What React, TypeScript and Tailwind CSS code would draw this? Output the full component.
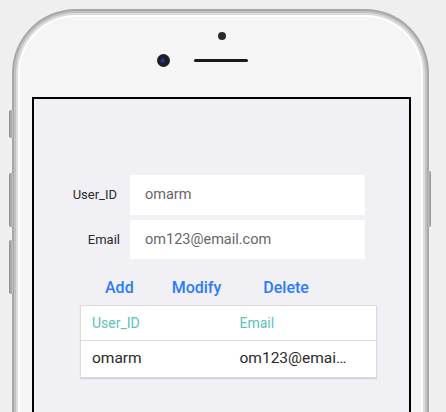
import React from "react";

const users = [{ id: "omarm", email: "om123@email.com", shown: "om123@emai…" }];

const App: React.FC = () => {
  return (
    <div className="relative w-[446px] h-[412px] overflow-hidden bg-[#efefef] font-['Roboto',sans-serif]">
      {/* side buttons */}
      <div className="absolute left-[9px] top-[110px] w-[4px] h-[28px] rounded-l-[2px] bg-gradient-to-r from-[#8f8f8f] to-[#c4c4c4]" />
      <div className="absolute left-[9px] top-[173px] w-[4px] h-[54px] rounded-l-[2px] bg-gradient-to-r from-[#8f8f8f] to-[#c4c4c4]" />
      <div className="absolute left-[9px] top-[240px] w-[4px] h-[54px] rounded-l-[2px] bg-gradient-to-r from-[#8f8f8f] to-[#c4c4c4]" />
      <div className="absolute left-[428px] top-[171px] w-[3px] h-[56px] rounded-r-[2px] bg-gradient-to-r from-[#c4c4c4] to-[#8f8f8f]" />

      <div className="pt-[9px] pl-[12px]">
        {/* phone frame */}
        <div className="w-[417px] h-[520px] rounded-[64px] bg-[#a8a8a8] p-[2px]">
          <div className="h-full rounded-[62px] bg-[#c2c2c2] p-[2px]">
            <div className="h-full rounded-[60px] bg-[#dcdcdc] p-[2px]">
              <div className="h-full rounded-[58px] bg-white p-[2px]">
                <div className="h-full rounded-[56px] bg-[#f5f5f5] flex flex-col">
                  {/* front sensor dot */}
                  <div className="mt-[15px] self-center w-[8px] h-[8px] rounded-full bg-[#2b2b2b] ml-[2px]" />
                  {/* camera + speaker */}
                  <div className="mt-[14px] grid grid-cols-[1fr_auto_1fr] items-center h-[13px]">
                    <div className="flex justify-end pr-[24px]">
                      <div className="w-[13px] h-[13px] rounded-full bg-[radial-gradient(circle_at_45%_50%,#2d4f96_0%,#142040_30%,#1c1c1c_55%,#3a3a3a_100%)]" />
                    </div>
                    <div className="w-[54px] h-[3px] rounded-full bg-[#1a1a1a]" />
                    <div />
                  </div>

                  {/* screen */}
                  <div className="mt-[30px] ml-[12px] w-[379px] h-[400px] border-2 border-black bg-[#f0f0f5]">
                    <div className="pt-[76px] flex flex-col gap-[5px]">
                      <div className="flex items-center">
                        <div className="w-[96px] pr-[13px] flex justify-end text-[13px] text-[#2a2a2a]">User_ID</div>
                        <div className="w-[235px] h-[40px] bg-white flex items-center pl-[15px] text-[14.5px] text-[#666]">
                          omarm
                        </div>
                      </div>
                      <div className="flex items-center">
                        <div className="w-[96px] pr-[10px] flex justify-end text-[13px] text-[#2a2a2a]">Email</div>
                        <div className="w-[235px] h-[39px] bg-white flex items-center pl-[15px] text-[14.5px] text-[#666]">
                          om123@email.com
                        </div>
                      </div>
                    </div>

                    {/* actions */}
                    <div className="mt-[17px] ml-[71px] flex items-center h-[24px] text-[16px] font-medium text-[#2b7bff]">
                      <button className="leading-none">Add</button>
                      <button className="leading-none ml-[38px]">Modify</button>
                      <button className="leading-none ml-[42px]">Delete</button>
                    </div>

                    {/* table */}
                    <div className="mt-[5px] ml-[46px] w-[297px] border border-[#dcdcdc] bg-white shadow-[0_1px_1px_rgba(0,0,0,0.12)]">
                      <div className="grid grid-cols-2 h-[35px] items-center border-b border-[#dcdcdc] text-[14px] text-[#5cc2ba]">
                        <div className="pl-[11px]">User_ID</div>
                        <div className="pl-[11px]">Email</div>
                      </div>
                      {users.map((u) => (
                        <div key={u.id} className="grid grid-cols-2 h-[36px] items-center text-[15.5px] text-[#2a2a2a]">
                          <div className="pl-[11px]">{u.id}</div>
                          <div className="pl-[11px] whitespace-nowrap" title={u.email}>
                            {u.shown}
                          </div>
                        </div>
                      ))}
                    </div>
                  </div>
                </div>
              </div>
            </div>
          </div>
        </div>
      </div>
    </div>
  );
};

export default App;
